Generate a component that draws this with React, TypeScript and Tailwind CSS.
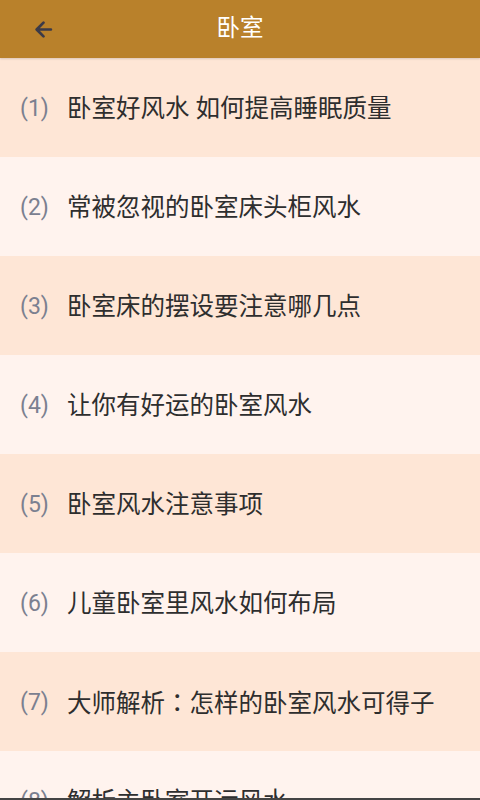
import React from "react";

const items = [
  "卧室好风水 如何提高睡眠质量",
  "常被忽视的卧室床头柜风水",
  "卧室床的摆设要注意哪几点",
  "让你有好运的卧室风水",
  "卧室风水注意事项",
  "儿童卧室里风水如何布局",
  "大师解析：怎样的卧室风水可得子",
  "解析主卧室开运风水",
];

function Title({ t }: { t: string }) {
  const parts = t.split("：");
  if (parts.length === 1) return <>{t}</>;
  return (
    <>
      {parts[0]}
      <span style={{ fontFamily: '"Noto Sans CJK TC", sans-serif' }}>：</span>
      {parts[1]}
    </>
  );
}

export default function App() {
  return (
    <div
      className="w-[480px] h-[800px] overflow-hidden flex flex-col bg-[#fff3ee] relative"
      style={{ fontFamily: 'Roboto, "Noto Sans CJK SC", sans-serif' }}
    >
      <div className="h-[58px] shrink-0 bg-[#b9812b] flex items-center relative z-10 shadow-[0_1px_2px_rgba(0,0,0,0.15)]">
        <div className="flex items-center pl-[34px]">
          <svg width="19" height="19" viewBox="0 0 18 18" fill="none">
            <path d="M16 9H3M9 2.5L2.5 9L9 15.5" stroke="#3b3a48" strokeWidth="2.6" strokeLinecap="round" strokeLinejoin="round" />
          </svg>
        </div>
        <div className="absolute inset-0 flex items-center justify-center text-white text-[23.5px] pointer-events-none">
          卧室
        </div>
      </div>
      <div className="flex flex-col">
        {items.map((t, i) => (
          <div
            key={i}
            className={`h-[99px] shrink-0 flex items-center pl-[20px] pt-[3px] ${i % 2 === 0 ? "bg-[#fee6d6]" : "bg-[#fff3ee]"}`}
          >
            <span className="text-[23px] text-[#7b8090] w-[47px]">({i + 1})</span>
            <span className="text-[24.5px] text-[#2e2e2e]">
              <Title t={t} />
            </span>
          </div>
        ))}
      </div>
      <div className="absolute left-0 right-0 bottom-0 h-[2px] bg-[#444444]" />
    </div>
  );
}
